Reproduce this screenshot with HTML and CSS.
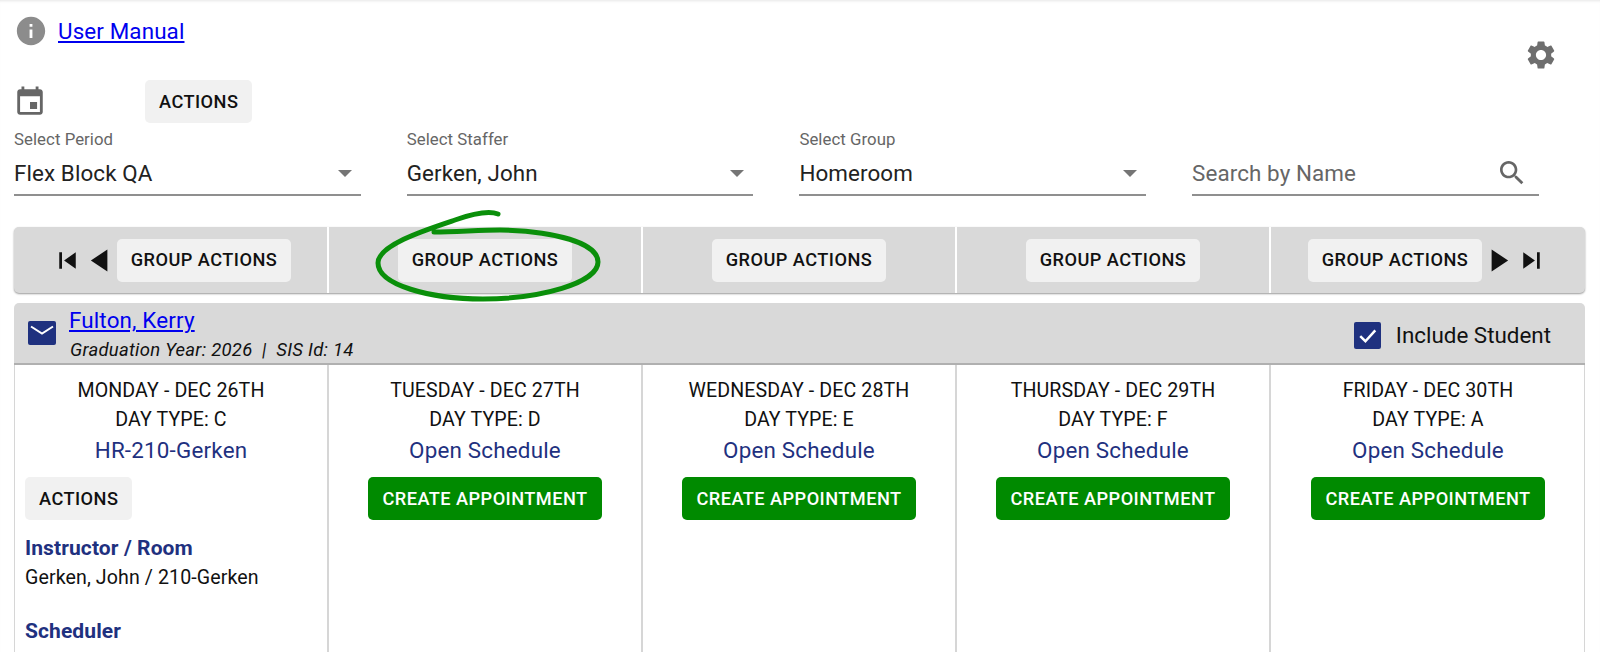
FILE: index.html
```html
<!DOCTYPE html>
<html lang="en">
<head>
<meta charset="utf-8">
<title>Schedule</title>
<link rel="stylesheet" href="styles.css">
</head>
<body>
<div class="page">
  <div class="manual-row">
    <svg class="icon info" viewBox="0 0 24 24"><path d="M12 2C6.48 2 2 6.48 2 12s4.48 10 10 10 10-4.48 10-10S17.52 2 12 2zm1 15h-2v-6h2v6zm0-8h-2V7h2v2z"/></svg>
    <a class="manual-link" href="#">User Manual</a>
    <svg class="icon gear" viewBox="0 0 24 24"><path d="M19.14 12.94c.04-.3.06-.61.06-.94 0-.32-.02-.64-.07-.94l2.03-1.58c.18-.14.23-.41.12-.61l-1.92-3.32c-.12-.22-.37-.29-.59-.22l-2.39.96c-.5-.38-1.03-.7-1.62-.94l-.36-2.54c-.04-.24-.24-.41-.48-.41h-3.84c-.24 0-.43.17-.47.41l-.36 2.54c-.59.24-1.13.57-1.62.94l-2.39-.96c-.22-.08-.47 0-.59.22L2.74 8.87c-.12.21-.08.47.12.61l2.03 1.58c-.05.3-.09.63-.09.94s.02.64.07.94l-2.03 1.58c-.18.14-.23.41-.12.61l1.92 3.32c.12.22.37.29.59.22l2.39-.96c.5.38 1.03.7 1.62.94l.36 2.54c.05.24.24.41.48.41h3.84c.24 0 .44-.17.47-.41l.36-2.54c.59-.24 1.13-.56 1.62-.94l2.39.96c.22.08.47 0 .59-.22l1.92-3.32c.12-.22.07-.47-.12-.61l-2.01-1.58zM12 15.6c-1.98 0-3.6-1.62-3.6-3.6s1.62-3.6 3.6-3.6 3.6 1.62 3.6 3.6-1.62 3.6-3.6 3.6z"/></svg>
  </div>
  <div class="action-row">
    <svg class="icon calendar" viewBox="0 0 24 24"><path d="M17 12h-5v5h5v-5zM16 1v2H8V1H6v2H5c-1.11 0-1.99.9-1.99 2L3 19c0 1.1.89 2 2 2h14c1.1 0 2-.9 2-2V5c0-1.1-.9-2-2-2h-1V1h-2zm3 18H5V8h14v11z"/></svg>
    <button class="btn">Actions</button>
  </div>
  <div class="filters">
    <div class="field">
      <span class="field-label">Select Period</span>
      <div class="field-control"><span>Flex Block QA</span><i class="caret"></i></div>
    </div>
    <div class="field">
      <span class="field-label">Select Staffer</span>
      <div class="field-control"><span>Gerken, John</span><i class="caret"></i></div>
    </div>
    <div class="field">
      <span class="field-label">Select Group</span>
      <div class="field-control"><span>Homeroom</span><i class="caret"></i></div>
    </div>
    <div class="field">
      <span class="field-label">&nbsp;</span>
      <div class="field-control search"><span>Search by Name</span>
        <svg class="icon search-icon" viewBox="0 0 24 24"><path d="M15.5 14h-.79l-.28-.27C15.41 12.59 16 11.11 16 9.5 16 5.91 13.09 3 9.5 3S3 5.91 3 9.5 5.91 16 9.5 16c1.61 0 3.09-.59 4.23-1.57l.27.28v.79l5 4.99L20.49 19l-4.99-5zm-6 0C7.01 14 5 11.99 5 9.5S7.01 5 9.5 5 14 7.01 14 9.5 11.99 14 9.5 14z"/></svg>
      </div>
    </div>
  </div>
  <div class="toolbar">
    <div class="tool-cell">
      <svg class="icon nav" viewBox="0 0 24 24"><path d="M6 6h2v12H6zm3.5 6 8.5 6V6z"/></svg>
      <svg class="icon nav" viewBox="0 0 24 24"><path d="M17 4v16L5 12z"/></svg>
      <button class="btn">Group Actions</button>
    </div>
    <div class="tool-cell"><button class="btn">Group Actions</button></div>
    <div class="tool-cell"><button class="btn">Group Actions</button></div>
    <div class="tool-cell"><button class="btn">Group Actions</button></div>
    <div class="tool-cell">
      <button class="btn">Group Actions</button>
      <svg class="icon nav" viewBox="0 0 24 24"><path d="M7 4v16l12-8z"/></svg>
      <svg class="icon nav" viewBox="0 0 24 24"><path d="M6 18l8.5-6L6 6v12zM16 6v12h2V6h-2z"/></svg>
    </div>
  </div>
  <div class="student-card">
    <div class="student-head">
      <svg class="mail" viewBox="0 0 28 24"><rect x="0" y="0" width="28" height="24" rx="2"/><path class="mail-flap" d="M3 5.5l11 7 11-7"/></svg>
      <div class="student-info">
        <a class="student-name" href="#">Fulton, Kerry</a>
        <div class="student-meta">Graduation Year: 2026 &nbsp;|&nbsp; SIS Id: 14</div>
      </div>
      <label class="include">
        <svg class="check" viewBox="0 0 26 26"><rect width="26" height="26" rx="2"/><path class="check-mark" d="M6 13.5l5 5L20.5 8"/></svg>
        <span>Include Student</span>
      </label>
    </div>
    <div class="days">
      <div class="day">
        <div class="day-line">MONDAY - DEC 26TH</div>
        <div class="day-line">DAY TYPE: C</div>
        <a class="day-link" href="#">HR-210-Gerken</a>
        <div class="day-body">
          <button class="btn">Actions</button>
          <h4 class="detail-title">Instructor / Room</h4>
          <p class="detail-text">Gerken, John / 210-Gerken</p>
          <h4 class="detail-title scheduler">Scheduler</h4>
        </div>
      </div>
      <div class="day">
        <div class="day-line">TUESDAY - DEC 27TH</div>
        <div class="day-line">DAY TYPE: D</div>
        <a class="day-link" href="#">Open Schedule</a>
        <button class="btn create">Create Appointment</button>
      </div>
      <div class="day">
        <div class="day-line">WEDNESDAY - DEC 28TH</div>
        <div class="day-line">DAY TYPE: E</div>
        <a class="day-link" href="#">Open Schedule</a>
        <button class="btn create">Create Appointment</button>
      </div>
      <div class="day">
        <div class="day-line">THURSDAY - DEC 29TH</div>
        <div class="day-line">DAY TYPE: F</div>
        <a class="day-link" href="#">Open Schedule</a>
        <button class="btn create">Create Appointment</button>
      </div>
      <div class="day">
        <div class="day-line">FRIDAY - DEC 30TH</div>
        <div class="day-line">DAY TYPE: A</div>
        <a class="day-link" href="#">Open Schedule</a>
        <button class="btn create">Create Appointment</button>
      </div>
    </div>
  </div>
</div>
<svg class="scribble" viewBox="0 0 1600 652"><path d="M498 214C490 211 475 213 455 220C425 230 378 245 378 263C378 285 430 299 483 299C540 299 598 283 598 262C598 243 555 231 500 230C480 230 455 232 434 232"/></svg>
</body>
</html>
```
FILE: styles.css
```css
* { box-sizing: border-box; }
html, body { margin: 0; height: 652px; overflow: hidden; }
body {
  background: #fff;
  color: #111;
  font-family: Roboto, "Liberation Sans", sans-serif;
  position: relative;
  box-shadow: inset 0 3px 3px -2px rgba(0,0,0,.1);
}
.page { padding: 0 15px 0 14px; }
.icon { display: block; flex: none; fill: #757575; }
.manual-row { height: 79px; display: flex; align-items: flex-start; position: relative; }
.info { width: 34px; height: 34px; margin: 14px 10px 0 0; fill: #8c8c8c; }
.manual-link { color: #0000ee; font-size: 22.4px; letter-spacing: .12px; line-height: 26px; margin-top: 18px; }
.gear { width: 34px; height: 34px; margin: 38px 27px 0 auto; fill: #6e6e6e; }
.action-row { height: 45px; display: flex; align-items: flex-start; padding-top: 1px; }
.calendar { width: 34px; height: 34px; margin: 5px 98px 0 -1px; fill: #666; }
.btn {
  font: 500 18.2px/24px Roboto, sans-serif;
  letter-spacing: .45px;
  text-transform: uppercase;
  color: #111;
  background: #f1f1f1;
  border: 0;
  border-radius: 5px;
  height: 43px;
  padding: 0 14px;
}
.filters { display: grid; grid-template-columns: repeat(4, 346.5px); column-gap: 46.2px; height: 103px; }
.field { display: block; }
.field-label { display: block; color: #666; font-size: 16.8px; letter-spacing: .05px; line-height: 20px; margin-top: 5px; }
.field-control {
  height: 47px;
  display: flex;
  align-items: center;
  justify-content: space-between;
  border-bottom: 2px solid #8f8f8f;
  font-size: 22.4px;
  letter-spacing: .1px;
  color: #222;
  padding: 3px 9px 0 0;
}
.field-control.search { color: #666; padding-right: 13px; }
.caret { border: 7px solid transparent; border-top-color: #757575; border-bottom: 0; }
.search-icon { width: 32px; height: 32px; fill: #666; margin-right: -2px; }
.toolbar {
  display: grid;
  grid-template-columns: repeat(5, 1fr);
  height: 66px;
  padding-left: 1px;
  background: #d9d9d9;
  border-radius: 5px;
  box-shadow: 0 1px 2px rgba(0,0,0,.4);
}
.tool-cell {
  display: flex;
  align-items: center;
  justify-content: center;
  border-right: 2px solid #fff;
}
.tool-cell:last-child { border-right: 0; }
.nav { width: 33px; height: 33px; fill: #111; }
.student-card { margin-top: 10px; }
.student-head {
  height: 62px;
  display: flex;
  align-items: center;
  background: #d9d9d9;
  border-radius: 5px 5px 0 0;
  border-bottom: 2px solid #b0b0b0;
  padding: 0 34px 0 14px;
}
.mail { width: 28px; height: 24px; margin-right: 13px; fill: #1f317f; }
.mail-flap { fill: none; stroke: #fff; stroke-width: 2; }
.student-info { flex: 1; padding-top: 3px; }
.student-name { display: block; color: #0000ee; font-size: 22.4px; letter-spacing: .15px; line-height: 24px; }
.student-meta { font-style: italic; font-size: 18.5px; letter-spacing: .25px; line-height: 22px; margin: 7px 0 0 1px; }
.include { display: flex; align-items: center; font-size: 22.4px; padding-top: 4px; }
.check { width: 27px; height: 27px; margin-right: 15px; fill: #1f317f; }
.check-mark { fill: none; stroke: #fff; stroke-width: 2.4; }
.days {
  display: grid;
  grid-template-columns: repeat(5, 1fr);
  height: 300px;
  border-left: 1px solid #d6d6d6;
  box-shadow: inset -1px 0 0 #d6d6d6;
}
.day { text-align: center; border-right: 2px solid #d6d6d6; padding-top: 11px; }
.day:last-child { border-right: 0; }
.day-line { font-size: 19.6px; letter-spacing: .1px; line-height: 29px; }
.day-link { display: block; color: #1f317f; font-size: 22.4px; letter-spacing: .2px; line-height: 32px; text-decoration: none; margin-bottom: 11px; }
.day-body { text-align: left; padding-left: 10px; }
.create { background: #008a00; color: #fff; }
.detail-title { margin: 15px 0 0; font-size: 21px; letter-spacing: .1px; line-height: 26px; font-weight: 700; color: #1f317f; }
.detail-text { margin: 4px 0 0; font-size: 19.6px; letter-spacing: .1px; line-height: 26px; }
.scheduler { margin-top: 27px; }
.scribble { position: absolute; inset: 0; width: 1600px; height: 652px; pointer-events: none; }
.scribble path { fill: none; stroke: #0a8f0a; stroke-width: 5; stroke-linecap: round; }
```
